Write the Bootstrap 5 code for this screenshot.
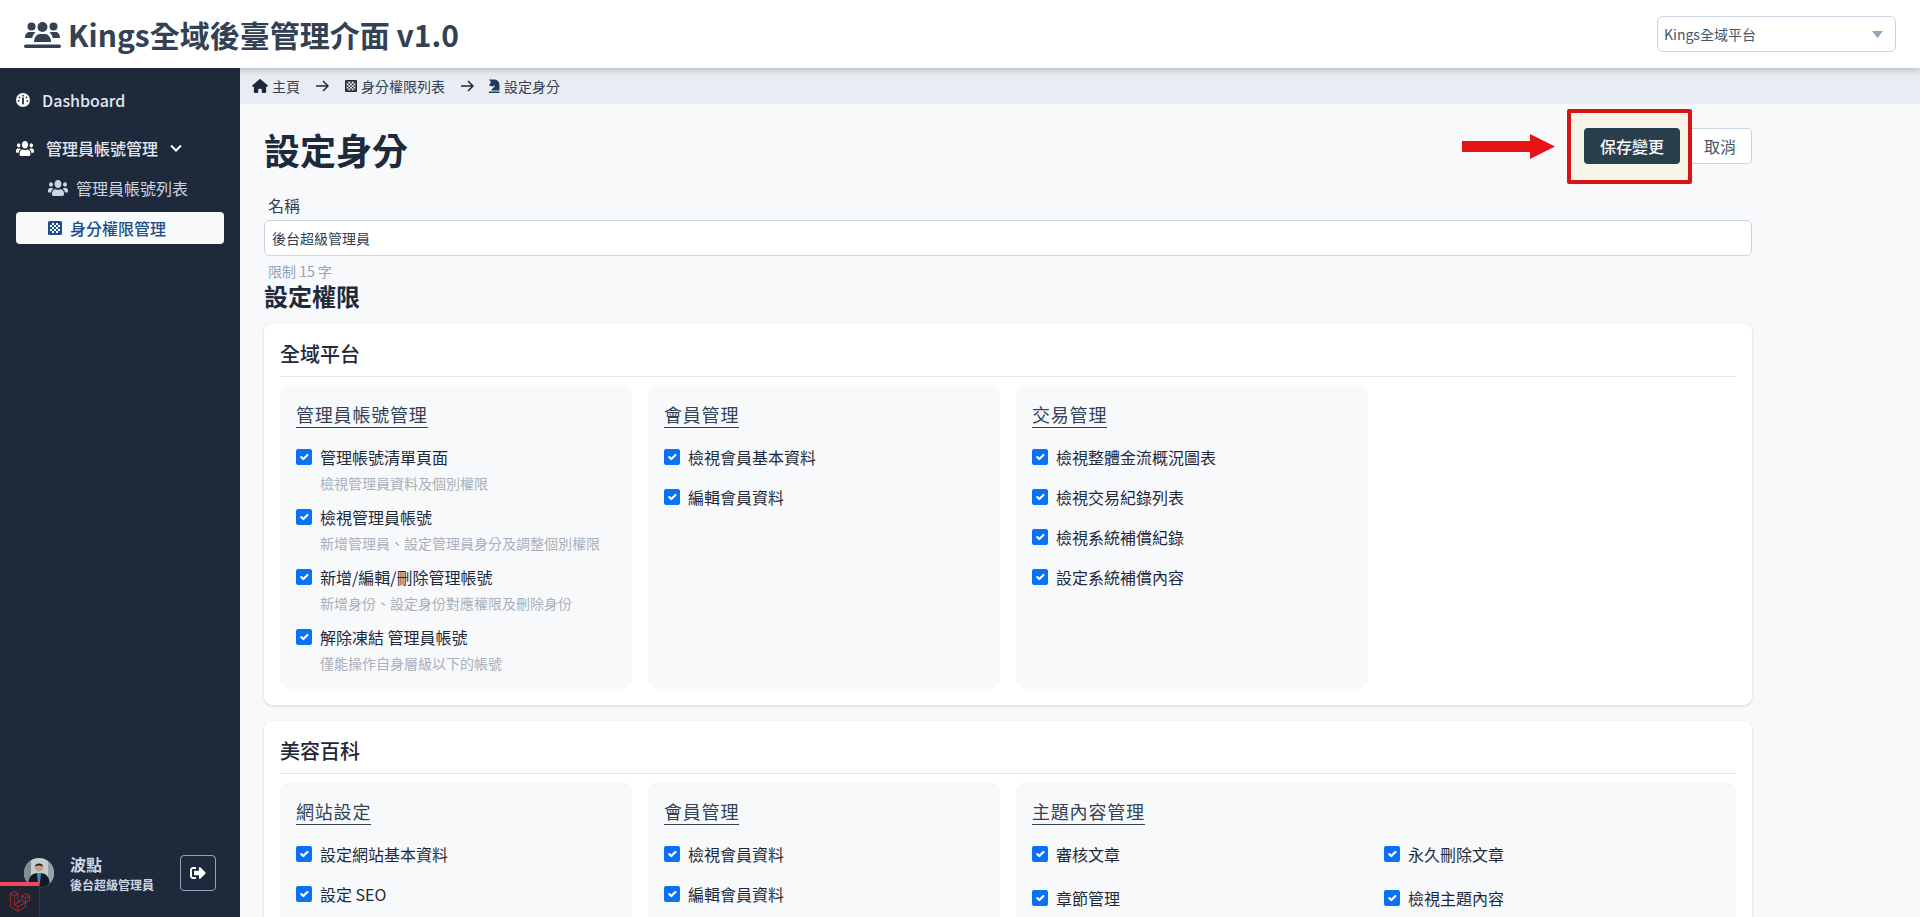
<!DOCTYPE html>
<html lang="zh-Hant">
<head>
<meta charset="utf-8">
<title>設定身分</title>
<link href="https://cdn.jsdelivr.net/npm/bootstrap@5.3.0/dist/css/bootstrap.min.css" rel="stylesheet">
<style>
html,body{height:100%;overflow:hidden}
body{font-family:"Noto Sans CJK TC","Noto Sans",sans-serif;background:#f8f9fb;color:#1e293b}
.top-bar{height:68px;background:#fff;box-shadow:0 2px 6px rgba(30,41,59,.25);position:relative;z-index:5;padding:0 24px}
.brand-row{gap:7px}
.brand-title{font-size:30px;font-weight:700;color:#334155;margin:0;line-height:1}
.brand-icon{width:37px;height:27px;fill:#334155}
.platform-select{width:239px;height:36px;font-size:14px;color:#475569;border-color:#cbd5e1;border-radius:6px;padding:0 30px 0 6px;background-size:11px 7px;background-position:right 12px center;background-image:url("data:image/svg+xml,%3Csvg xmlns='http://www.w3.org/2000/svg' viewBox='0 0 11 7'%3E%3Cpath fill='%2394a3b8' d='M0 0h11L5.500 7z'/%3E%3C/svg%3E")}
.shell{height:849px}
.side-bar{width:240px;background:#1e293b;flex:none;position:relative}
.side-nav{padding-top:19px}
.side-link{display:flex;align-items:center;color:#e2e8f0;font-weight:500;font-size:16px;line-height:24px;text-decoration:none}
.side-dash{padding-left:16px;gap:12px;height:26px}
.side-group{padding-left:16px;gap:12px;margin-top:22px;height:26px}
.side-sub{padding-left:48px;gap:8px;margin-top:14px;height:26px;color:#cbd5e1;font-weight:400}
.side-active{margin:11px 16px 0;padding-left:32px;gap:8px;height:32px;background:#f8fafc;border-radius:4px;color:#1e4e8c;font-weight:500}
.side-user{position:absolute;left:24px;right:24px;bottom:23px}
.user-name{font-size:16px;font-weight:700;color:#cbd5e1;line-height:24px}
.user-role{font-size:12px;font-weight:700;color:#cbd5e1;line-height:18px}
.logout-btn{width:36px;height:36px;border:1px solid #94a3b8;border-radius:4px;background:transparent;padding:0;display:flex;align-items:center;justify-content:center}
.dev-tab{position:absolute;left:0;bottom:0;width:40px;height:35px;background:#1f2530;border-top:4px solid #f4475c;border-right:1px solid #333a47;display:flex;align-items:center;justify-content:center}
.crumbs{height:36px;background:#e9edf3;padding-left:12px;font-size:14px;color:#334155}
.crumb-gap{margin:0 16px}
.crumb-gap-tight{margin:0 14px 0 16px}
.page-area{width:1488px;margin-left:24px;position:relative}
.head-row{margin-top:24px;position:relative}
.page-title{font-size:36px;font-weight:700;line-height:43px;margin:0;color:#1e293b}
.save-btn{position:relative;z-index:3;width:96px;height:36px;padding:0;background:#2a3f4d;border:0;border-radius:4px;color:#fff;font-size:16px;font-weight:500}
.cancel-btn{width:64px;height:36px;padding:0;background:#fff;border:1px solid #cbd5e1;border-radius:4px;color:#475569;font-size:16px}
.mark-box{position:absolute;left:1303px;top:-19px;width:125px;height:75px;border:4px solid #d81414;border-radius:2px;background:#f7f5e8;z-index:2}
.mark-arrow{position:absolute;left:1198px;top:6px;width:93px;height:25px;z-index:2}
.name-label{font-size:16px;line-height:24px;margin:22px 0 3px 4px;display:block;color:#334155}
.name-input{height:36px;font-size:14px;color:#334155;border-color:#cbd5e1;padding:0 7px;border-radius:6px}
.hint-text{font-size:14px;line-height:20px;margin:5px 0 0 4px;color:#94a3b8}
.perm-heading{font-size:24px;font-weight:700;line-height:29px;margin:0 0 14px;color:#1e293b}
.scope-card{background:#fff;border-radius:8px;box-shadow:0 1px 3px rgba(30,41,59,.18);padding:15px 16px 16px;margin-bottom:16px}
.scope-title{font-size:20px;font-weight:500;line-height:30px;padding-bottom:7px;border-bottom:1px solid #e5e7eb;margin:0 0 8px;color:#1e293b}
.perm-grid{display:grid;grid-template-columns:repeat(4,352px);gap:16px}
.perm-panel{background:#f8f9fb;border-radius:10px;padding:16px}
.panel-wide{grid-column:span 2}
.panel-title{display:inline-block;font-size:18px;letter-spacing:.8px;font-weight:400;line-height:26px;border-bottom:1px solid #334155;color:#334155;margin:0 0 17px}
.perm-item{display:flex;flex-wrap:wrap;align-items:center;column-gap:8px;margin-bottom:16px;font-size:16px;line-height:24px;color:#1e293b}
.perm-item .form-check-input{margin:0;width:16px;height:16px;flex:none;border-radius:2px;--bs-form-check-bg-image:url("data:image/svg+xml,%3Csvg xmlns='http://www.w3.org/2000/svg' viewBox='0 0 16 16'%3E%3Cpath fill='none' stroke='%23fff' stroke-width='2.800' d='M3.500 8.200l3 3 6-6.500'/%3E%3C/svg%3E")}
.perm-item .form-check-input:checked{background-color:#0b72f5;border-color:#0b72f5}
.perm-item.with-note{margin-bottom:12px}
.perm-item:last-child{margin-bottom:0}
.perm-item label{margin:0}
.perm-note{width:100%;padding-left:24px;margin-top:4px;font-size:14px;line-height:20px;color:#a8b0bd}
.two-up{display:grid;grid-template-columns:336px 336px;column-gap:16px;row-gap:20px}
.two-up .perm-item{margin:0}
.ico-white{fill:#fff}
</style>
</head>
<body>
<header class="top-bar d-flex align-items-center justify-content-between">
  <div class="d-flex align-items-center brand-row">
    <svg class="brand-icon" viewBox="0 0 37 27"><circle cx="18.500" cy="6" r="5"/><circle cx="7.500" cy="5.500" r="4"/><circle cx="29.500" cy="5.500" r="4"/><path d="M10 21c0-5 3-8 6-8h5c3 0 6 3 6 8z"/><path d="M1 17c0-3.500 2-6 4-6h4.500c.8 0 1.500.2 2 .6C9.500 13 8.500 15 8.300 17z"/><path d="M36 17c0-3.500-2-6-4-6h-4.500c-.8 0-1.500.2-2 .6 2 1.400 3 3.400 3.200 5.400z"/><rect x="0" y="23.500" width="37" height="3.500" rx="1.750"/></svg>
    <h1 class="brand-title">Kings全域後臺管理介面 v1.0</h1>
  </div>
  <select class="form-select platform-select"><option>Kings全域平台</option></select>
</header>
<div class="d-flex shell">
  <aside class="side-bar">
    <nav class="side-nav">
      <a class="side-link side-dash" href="#">
        <svg width="14" height="14" viewBox="0 0 16 16"><circle cx="8" cy="8" r="8" fill="#fff"/><g fill="#1e293b"><circle cx="4" cy="5" r="1"/><circle cx="8" cy="3" r="1"/><circle cx="12" cy="5" r="1"/><circle cx="3" cy="9" r="1"/><circle cx="13" cy="9" r="1"/><path d="M7 5h2v7a1 1 0 0 1-2 0z"/></g></svg>
        <span>Dashboard</span></a>
      <a class="side-link side-group" href="#">
        <svg width="18" height="15" viewBox="0 32 640 448" preserveAspectRatio="none" class="ico-white"><path d="M96 224c35.3 0 64-28.7 64-64s-28.7-64-64-64-64 28.7-64 64 28.7 64 64 64zm448 0c35.3 0 64-28.7 64-64s-28.7-64-64-64-64 28.7-64 64 28.7 64 64 64zm32 32h-64c-17.6 0-33.500 7.100-45.100 18.600 40.300 22.100 68.900 62 75.100 109.400h66c17.700 0 32-14.300 32-32v-32c0-35.300-28.700-64-64-64zm-256 0c61.900 0 112-50.100 112-112S381.900 32 320 32 208 82.100 208 144s50.100 112 112 112zm76.800 32h-8.300c-20.800 10-43.900 16-68.500 16s-47.600-6-68.500-16h-8.300C179.600 288 128 339.600 128 403.200V432c0 26.500 21.500 48 48 48h288c26.500 0 48-21.500 48-48v-28.800c0-63.600-51.600-115.200-115.200-115.200zm-223.700-13.400C161.500 263.100 145.600 256 128 256H64c-35.300 0-64 28.700-64 64v32c0 17.700 14.300 32 32 32h65.900c6.300-47.400 34.900-87.300 75.200-109.400z"/></svg>
        <span>管理員帳號管理</span>
        <svg width="12" height="8" viewBox="0 0 12 8"><path d="M1 1.500l5 5 5-5" fill="none" stroke="#fff" stroke-width="2"/></svg></a>
      <a class="side-link side-sub" href="#">
        <svg width="20" height="16" viewBox="0 32 640 448" preserveAspectRatio="none" fill="#cbd5e1"><path d="M96 224c35.300 0 64-28.700 64-64s-28.700-64-64-64-64 28.700-64 64 28.700 64 64 64zm448 0c35.300 0 64-28.700 64-64s-28.700-64-64-64-64 28.700-64 64 28.700 64 64 64zm32 32h-64c-17.600 0-33.500 7.100-45.100 18.600 40.300 22.100 68.900 62 75.100 109.400h66c17.700 0 32-14.300 32-32v-32c0-35.300-28.700-64-64-64zm-256 0c61.900 0 112-50.100 112-112S381.900 32 320 32 208 82.100 208 144s50.100 112 112 112zm76.800 32h-8.300c-20.800 10-43.900 16-68.500 16s-47.600-6-68.500-16h-8.300C179.600 288 128 339.600 128 403.200V432c0 26.500 21.500 48 48 48h288c26.500 0 48-21.500 48-48v-28.800c0-63.600-51.600-115.200-115.200-115.200zm-223.700-13.400C161.500 263.100 145.600 256 128 256H64c-35.300 0-64 28.700-64 64v32c0 17.700 14.300 32 32 32h65.900c6.300-47.400 34.900-87.300 75.200-109.400z"/></svg>
        <span>管理員帳號列表</span></a>
      <a class="side-link side-active" href="#">
        <svg width="14" height="14" viewBox="0 0 14 14"><rect width="14" height="14" rx="1.500" fill="#1e4e8c"/><rect x="2" y="2" width="10" height="10" fill="#fff"/><path d="M2 2h2v2H2zM6 2h2v2H6zM10 2h2v2h-2zM4 4h2v2H4zM8 4h2v2H8zM2 6h2v2H2zM6 6h2v2H6zM10 6h2v2h-2zM4 8h2v2H4zM8 8h2v2H8zM2 10h2v2H2zM6 10h2v2H6zM10 10h2v2h-2z" fill="#1e4e8c"/></svg>
        <span>身分權限管理</span></a>
    </nav>
    <div class="side-user d-flex align-items-center justify-content-between">
      <div class="d-flex align-items-center gap-3">
        <svg width="30" height="30" viewBox="0 0 30 30"><defs><clipPath id="av"><circle cx="15" cy="15" r="15"/></clipPath></defs><g clip-path="url(#av)"><rect width="30" height="30" fill="#c2cdcf"/><rect x="0" y="0" width="7" height="30" fill="#7f8f93"/><rect x="24" y="0" width="6" height="30" fill="#93a4a8"/><path d="M4 30c0-11 3-15 11-15s11 4 11 15z" fill="#141922"/><path d="M13 15h4l-1 10h-2z" fill="#3f8fc2"/><circle cx="15" cy="9.500" r="4" fill="#c79f84"/><path d="M11 8.500c0-4 8-4 8 0-2-1.500-6-1.500-8 0z" fill="#2a211c"/></g></svg>
        <div>
          <div class="user-name">波點</div>
          <div class="user-role">後台超級管理員</div>
        </div>
      </div>
      <button class="logout-btn" type="button" aria-label="登出"><svg width="16" height="16" viewBox="0 0 512 512" class="ico-white"><path d="M497 273L329 441c-15 15-41 4.500-41-17v-96H152c-13.300 0-24-10.700-24-24v-96c0-13.300 10.700-24 24-24h136V88c0-21.400 25.900-32 41-17l168 168c9.300 9.400 9.300 24.600 0 34zM192 436v-40c0-6.600-5.400-12-12-12H96c-17.700 0-32-14.300-32-32V160c0-17.700 14.300-32 32-32h84c6.600 0 12-5.400 12-12V76c0-6.600-5.400-12-12-12H96c-53 0-96 43-96 96v192c0 53 43 96 96 96h84c6.600 0 12-5.400 12-12z"/></svg></button>
    </div>
    <div class="dev-tab"><svg width="20" height="21" viewBox="0 0 50 52" fill="#d0312d"><path d="M49.626 11.564a.809.809 0 0 1 .028.209v10.972a.8.8 0 0 1-.402.694l-9.209 5.302V39.25c0 .286-.152.55-.4.694L20.42 51.01c-.044.025-.092.041-.14.058-.018.006-.035.017-.054.022a.805.805 0 0 1-.41 0c-.022-.006-.042-.018-.063-.026-.044-.016-.09-.03-.132-.054L.402 39.944A.801.801 0 0 1 0 39.25V6.334c0-.072.01-.142.028-.21.006-.023.02-.044.028-.067.015-.042.029-.085.051-.124.015-.026.037-.047.055-.071.023-.032.044-.065.071-.093.023-.023.053-.04.079-.06.029-.024.055-.05.088-.069h.001l9.61-5.533a.802.802 0 0 1 .8 0l9.61 5.533h.002c.032.02.059.045.088.068.026.02.055.038.078.06.028.029.048.062.072.094.017.024.04.045.054.071.023.04.036.082.052.124.008.023.022.044.028.068a.809.809 0 0 1 .028.209v20.559l8.008-4.611v-10.51c0-.07.01-.141.028-.208.007-.024.02-.045.028-.068.016-.042.03-.085.052-.124.015-.026.037-.047.054-.071.024-.032.044-.065.072-.093.023-.023.052-.04.078-.06.03-.024.056-.05.088-.069h.001l9.611-5.533a.801.801 0 0 1 .8 0l9.61 5.533c.034.02.06.045.09.068.025.02.054.038.077.06.028.029.048.062.072.094.018.024.04.045.054.071.023.039.036.082.052.124.009.023.022.044.028.068zm-1.574 10.718v-9.124l-3.363 1.936-4.646 2.675v9.124l8.01-4.611zm-9.61 16.505v-9.13l-4.57 2.61-13.05 7.448v9.216l17.62-10.144zM1.602 7.719v31.068L19.22 48.93v-9.214l-9.204-5.209-.003-.002-.004-.002c-.031-.018-.057-.044-.086-.066-.025-.02-.054-.036-.076-.058l-.002-.003c-.026-.025-.044-.056-.066-.084-.02-.027-.044-.05-.06-.078l-.001-.003c-.018-.03-.029-.066-.042-.1-.013-.03-.03-.058-.038-.09v-.001c-.01-.038-.012-.078-.016-.117-.004-.03-.012-.06-.012-.09v-.002-21.481L4.965 9.654 1.602 7.72zm8.81-5.994L2.405 6.334l8.005 4.609 8.006-4.61-8.006-4.608zm4.164 28.764l4.645-2.674V7.719l-3.363 1.936-4.646 2.675v20.096l3.364-1.937zM39.243 7.164l-8.006 4.609 8.006 4.609 8.005-4.61-8.005-4.608zm-.801 10.605l-4.646-2.675-3.363-1.936v9.124l4.645 2.674 3.364 1.937v-9.124zM20.02 38.33l11.743-6.704 5.87-3.35-8-4.606-9.211 5.303-8.395 4.833 7.993 4.524z"/></svg></div>
  </aside>
  <main class="flex-grow-1">
    <div class="crumbs d-flex align-items-center">
      <svg width="16" height="14" viewBox="0 0 576 512" fill="#1e293b" class="me-1"><path d="M575.800 255.500c0 18-15 32.100-32 32.100h-32l.7 160.200c0 2.700-.2 5.400-.5 8.100V472c0 22.100-17.900 40-40 40H392c-22.100 0-40-17.900-40-40V384c0-17.700-14.300-32-32-32H256c-17.700 0-32 14.300-32 32v88c0 22.100-17.900 40-40 40H104c-22.100 0-40-17.900-40-40V287.600H32c-18 0-32-14-32-32.100c0-9 3-17 10-24L266.400 8c7-7 15-8 22-8s15 2 21 7L564.800 231.500c8 7 12 15 11 24z"/></svg>
      <span>主頁</span>
      <svg class="crumb-gap" width="13" height="12" viewBox="0 0 13 12" fill="none" stroke="#1e293b" stroke-width="1.500"><path d="M0 6h12M7 1l5 5-5 5"/></svg>
      <svg width="12" height="12" viewBox="0 0 14 14" class="me-1"><rect width="14" height="14" rx="1.500" fill="#1e293b"/><rect x="2" y="2" width="10" height="10" fill="#fff"/><path d="M2 2h2v2H2zM6 2h2v2H6zM10 2h2v2h-2zM4 4h2v2H4zM8 4h2v2H8zM2 6h2v2H2zM6 6h2v2H6zM10 6h2v2h-2zM4 8h2v2H4zM8 8h2v2H8zM2 10h2v2H2zM6 10h2v2H6zM10 10h2v2h-2z" fill="#1e293b"/></svg>
      <span>身分權限列表</span>
      <svg class="crumb-gap-tight" width="13" height="12" viewBox="0 0 13 12" fill="none" stroke="#1e293b" stroke-width="1.500"><path d="M0 6h12M7 1l5 5-5 5"/></svg>
      <svg width="12" height="14" viewBox="0 0 12 14" class="me-1" fill="#1e3a5f"><path d="M1 .5h5c3.500 0 5.500 2.500 5.500 6v5H3.500c0-2 3.500-3 3.500-5.500L5 7.500 3 7 1 6.500 3 3zM1 12.500h10.500V14H1z"/></svg>
      <span>設定身分</span>
    </div>
    <div class="page-area">
      <div class="head-row d-flex justify-content-between align-items-start">
        <h2 class="page-title">設定身分</h2>
        <div class="d-flex gap-2">
          <button class="save-btn" type="button">保存變更</button>
          <button class="cancel-btn" type="button">取消</button>
        </div>
        <div class="mark-box"></div>
        <svg class="mark-arrow" viewBox="0 0 93 25"><path d="M0 7h68V0l25 12.500L68 25v-7H0z" fill="#e61414"/></svg>
      </div>
      <label class="name-label" for="roleName">名稱</label>
      <input id="roleName" class="form-control name-input" value="後台超級管理員">
      <div class="hint-text">限制 15 字</div>
      <h3 class="perm-heading">設定權限</h3>

      <section class="scope-card">
        <h4 class="scope-title">全域平台</h4>
        <div class="perm-grid">
          <div class="perm-panel">
            <h5 class="panel-title">管理員帳號管理</h5>
            <div class="perm-item with-note"><input class="form-check-input" type="checkbox" checked><label>管理帳號清單頁面</label><div class="perm-note">檢視管理員資料及個別權限</div></div>
            <div class="perm-item with-note"><input class="form-check-input" type="checkbox" checked><label>檢視管理員帳號</label><div class="perm-note">新增管理員、設定管理員身分及調整個別權限</div></div>
            <div class="perm-item with-note"><input class="form-check-input" type="checkbox" checked><label>新增/編輯/刪除管理帳號</label><div class="perm-note">新增身份、設定身份對應權限及刪除身份</div></div>
            <div class="perm-item with-note"><input class="form-check-input" type="checkbox" checked><label>解除凍結 管理員帳號</label><div class="perm-note">僅能操作自身層級以下的帳號</div></div>
          </div>
          <div class="perm-panel">
            <h5 class="panel-title">會員管理</h5>
            <div class="perm-item"><input class="form-check-input" type="checkbox" checked><label>檢視會員基本資料</label></div>
            <div class="perm-item"><input class="form-check-input" type="checkbox" checked><label>編輯會員資料</label></div>
          </div>
          <div class="perm-panel">
            <h5 class="panel-title">交易管理</h5>
            <div class="perm-item"><input class="form-check-input" type="checkbox" checked><label>檢視整體金流概況圖表</label></div>
            <div class="perm-item"><input class="form-check-input" type="checkbox" checked><label>檢視交易紀錄列表</label></div>
            <div class="perm-item"><input class="form-check-input" type="checkbox" checked><label>檢視系統補償紀錄</label></div>
            <div class="perm-item"><input class="form-check-input" type="checkbox" checked><label>設定系統補償內容</label></div>
          </div>
        </div>
      </section>

      <section class="scope-card">
        <h4 class="scope-title">美容百科</h4>
        <div class="perm-grid">
          <div class="perm-panel">
            <h5 class="panel-title">網站設定</h5>
            <div class="perm-item"><input class="form-check-input" type="checkbox" checked><label>設定網站基本資料</label></div>
            <div class="perm-item"><input class="form-check-input" type="checkbox" checked><label>設定 SEO</label></div>
          </div>
          <div class="perm-panel">
            <h5 class="panel-title">會員管理</h5>
            <div class="perm-item"><input class="form-check-input" type="checkbox" checked><label>檢視會員資料</label></div>
            <div class="perm-item"><input class="form-check-input" type="checkbox" checked><label>編輯會員資料</label></div>
          </div>
          <div class="perm-panel panel-wide">
            <h5 class="panel-title">主題內容管理</h5>
            <div class="two-up">
              <div class="perm-item"><input class="form-check-input" type="checkbox" checked><label>審核文章</label></div>
              <div class="perm-item"><input class="form-check-input" type="checkbox" checked><label>永久刪除文章</label></div>
              <div class="perm-item"><input class="form-check-input" type="checkbox" checked><label>章節管理</label></div>
              <div class="perm-item"><input class="form-check-input" type="checkbox" checked><label>檢視主題內容</label></div>
            </div>
          </div>
        </div>
      </section>
    </div>
  </main>
</div>
<script src="https://cdn.jsdelivr.net/npm/bootstrap@5.3.0/dist/js/bootstrap.bundle.min.js"></script>
</body>
</html>
